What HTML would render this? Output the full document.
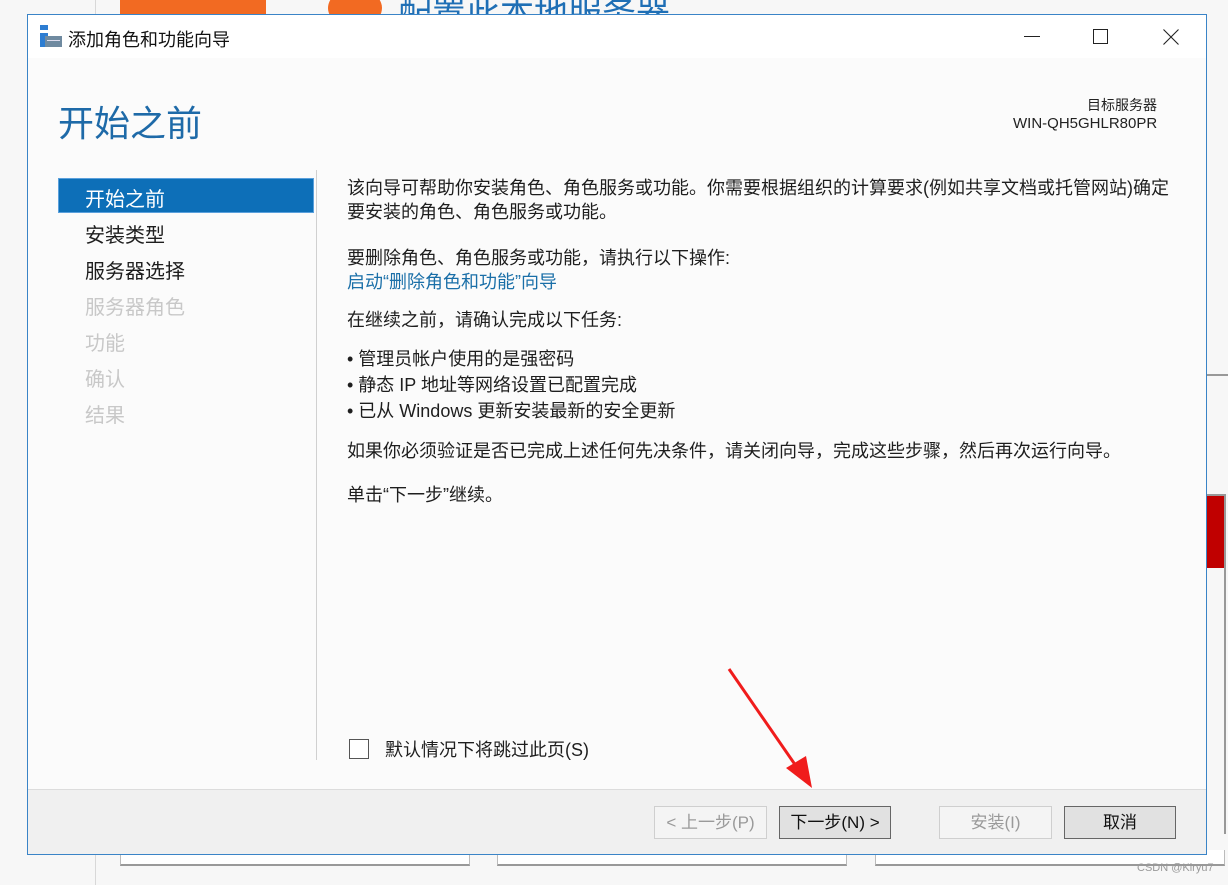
<!DOCTYPE html>
<html><head><meta charset="utf-8"><style>
*{margin:0;padding:0;box-sizing:border-box}
body{width:1228px;height:885px;position:relative;overflow:hidden;background:#f7f7f7;font-family:"Liberation Sans","Noto Sans CJK SC",sans-serif;color:#1e1e1e}
.a{position:absolute}
.t{position:absolute;white-space:nowrap}
</style></head><body>
<div class="a" style="left:95px;top:0;width:1px;height:885px;background:#d8d8d8"></div>
<div class="a" style="left:120px;top:0;width:146px;height:14px;background:#f26a22"></div>
<div class="a" style="left:328px;top:-12px;width:54px;height:40px;border-radius:50%;background:#f26a22"></div>
<div class="t" style="left:398px;top:-14px;font-size:34px;color:#1f6fb5">配置此本地服务器</div>
<div class="a" style="left:1206px;top:374px;width:22px;height:2px;background:#999"></div>
<div class="a" style="left:1206px;top:494px;width:20px;height:74px;background:#c00000;border-top:2px solid #999"></div>
<div class="a" style="left:1224px;top:494px;width:2px;height:340px;background:#999"></div>
<div class="a" style="left:120px;top:850px;width:350px;height:16px;border:1px solid #bbb;border-top:0;border-bottom:2px solid #999;background:#fff"></div>
<div class="a" style="left:497px;top:850px;width:350px;height:16px;border:1px solid #bbb;border-top:0;border-bottom:2px solid #999;background:#fff"></div>
<div class="a" style="left:875px;top:850px;width:350px;height:16px;border:1px solid #bbb;border-top:0;border-bottom:2px solid #999;background:#fff"></div>
<div class="t" style="left:1137px;top:862px;font-size:11px;color:#999">CSDN @Kiryu7</div>

<div class="a" style="left:27px;top:14px;width:1180px;height:841px;border:1px solid #3a84c7;background:#fbfbfb"></div>
<div class="a" style="left:28px;top:15px;width:1178px;height:43px;background:#fff"></div>
<div class="a" style="left:40px;top:25px;width:8px;height:22px;background:#2d7dd2"></div>
<div class="a" style="left:40px;top:30px;width:8px;height:3px;background:#fff"></div>
<div class="a" style="left:45px;top:36px;width:17px;height:11px;background:#6f8aa0"></div>
<div class="a" style="left:47px;top:40px;width:13px;height:1px;background:#dde"></div>
<div class="t" style="left:68px;top:26px;font-size:18px;color:#111">添加角色和功能向导</div>
<div class="a" style="left:1024px;top:36px;width:16px;height:1px;background:#222"></div>
<div class="a" style="left:1093px;top:29px;width:15px;height:15px;border:1px solid #222"></div>
<svg class="a" style="left:1163px;top:29px" width="16" height="16"><path d="M0.5 0.5L15.5 15.5M15.5 0.5L0.5 15.5" stroke="#222" stroke-width="1.1"/></svg>

<div class="t" style="left:58px;top:95px;font-size:36px;color:#1e6aa8">开始之前</div>
<div class="t" style="left:1087px;top:95px;font-size:14px;color:#222">目标服务器</div>
<div class="t" style="left:1013px;top:115px;font-size:15px;color:#222">WIN-QH5GHLR80PR</div>

<div class="a" style="left:58px;top:178px;width:256px;height:35px;background:#0d6fb8;border:1px solid #5aa0dc"></div>
<div class="a" style="left:316px;top:170px;width:1px;height:590px;background:#d0d0d0"></div>
<div class="t" style="left:85px;top:183px;font-size:20px;color:#fff">开始之前</div>
<div class="t" style="left:85px;top:219px;font-size:20px">安装类型</div>
<div class="t" style="left:85px;top:255px;font-size:20px">服务器选择</div>
<div class="t" style="left:85px;top:291px;font-size:20px;color:#c8c8c8">服务器角色</div>
<div class="t" style="left:85px;top:327px;font-size:20px;color:#c8c8c8">功能</div>
<div class="t" style="left:85px;top:363px;font-size:20px;color:#c8c8c8">确认</div>
<div class="t" style="left:85px;top:399px;font-size:20px;color:#c8c8c8">结果</div>

<div style="position:absolute;left:347px;top:176px;font-size:18px;line-height:24px;color:#1e1e1e;white-space:nowrap">
<div>该向导可帮助你安装角色、角色服务或功能。你需要根据组织的计算要求(例如共享文档或托管网站)确定</div>
<div>要安装的角色、角色服务或功能。</div>
<div style="margin-top:22px">要删除角色、角色服务或功能，请执行以下操作:</div>
<div style="color:#1a6fa8">启动“删除角色和功能”向导</div>
<div style="margin-top:14px">在继续之前，请确认完成以下任务:</div>
<div style="margin-top:14px;line-height:26px">• 管理员帐户使用的是强密码</div>
<div style="line-height:26px">• 静态 IP 地址等网络设置已配置完成</div>
<div style="line-height:26px">• 已从 Windows 更新安装最新的安全更新</div>
<div style="margin-top:15px">如果你必须验证是否已完成上述任何先决条件，请关闭向导，完成这些步骤，然后再次运行向导。</div>
<div style="margin-top:20px">单击“下一步”继续。</div>
</div>

<div class="a" style="left:349px;top:739px;width:20px;height:20px;border:1px solid #555;background:#fff"></div>
<div class="t" style="left:385px;top:736px;font-size:18px">默认情况下将跳过此页(S)</div>

<div class="a" style="left:28px;top:789px;width:1178px;height:65px;background:#f0f0f0;border-top:1px solid #dcdcdc"></div>
<div class="a" style="left:654px;top:806px;width:113px;height:33px;border:1px solid #cfcfcf;background:#f4f4f4;color:#9a9a9a;font-size:17px;text-align:center;line-height:31px">&lt; 上一步(P)</div>
<div class="a" style="left:779px;top:806px;width:112px;height:33px;border:1px solid #666;background:#e1e1e1;color:#111;font-size:17px;text-align:center;line-height:31px">下一步(N) &gt;</div>
<div class="a" style="left:939px;top:806px;width:113px;height:33px;border:1px solid #cfcfcf;background:#f4f4f4;color:#9a9a9a;font-size:17px;text-align:center;line-height:31px">安装(I)</div>
<div class="a" style="left:1064px;top:806px;width:112px;height:33px;border:1px solid #666;background:#e1e1e1;color:#111;font-size:17px;text-align:center;line-height:31px">取消</div>

<svg class="a" style="left:720px;top:660px" width="100" height="135">
<path d="M9 9L76 106" stroke="#f01c1c" stroke-width="3"/>
<path d="M66 108L92 128L86 96Z" fill="#f01c1c"/>
</svg>
</body></html>
